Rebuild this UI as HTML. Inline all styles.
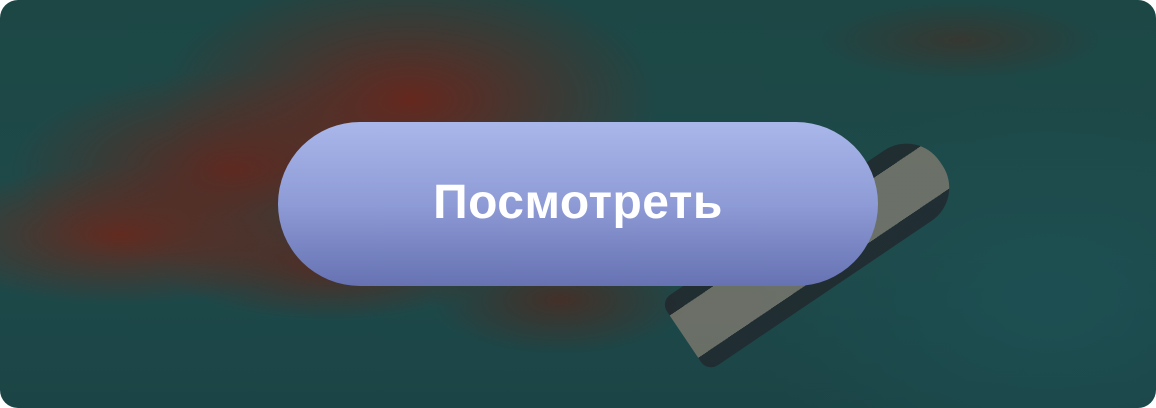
<!DOCTYPE html>
<html><head><meta charset="utf-8"><style>
html,body{margin:0;padding:0;background:#fff;}
.wrap{position:relative;width:1156px;height:408px;border-radius:18px;overflow:hidden;
background:
radial-gradient(ellipse 250px 130px at 410px 100px, rgba(105,38,28,0.95), rgba(105,38,28,0) 100%),
radial-gradient(ellipse 220px 100px at 230px 170px, rgba(100,38,28,0.9), rgba(100,38,28,0) 100%),
radial-gradient(ellipse 200px 70px at 120px 235px, rgba(105,40,28,0.9), rgba(105,40,28,0) 100%),
radial-gradient(ellipse 170px 55px at 330px 265px, rgba(95,38,28,0.85), rgba(95,38,28,0) 100%),
radial-gradient(ellipse 130px 55px at 560px 300px, rgba(80,40,30,0.75), rgba(80,40,30,0) 100%),
radial-gradient(ellipse 140px 40px at 960px 40px, rgba(80,40,30,0.5), rgba(80,40,30,0) 100%),
radial-gradient(ellipse 300px 200px at 1050px 300px, #1d4f52, rgba(29,79,82,0) 100%),
linear-gradient(180deg,#1c4745,#1e4a4a 60%,#1b4446);}
.ship{position:absolute;left:770px;top:95px;width:85px;height:310px;transform:rotate(56deg);transform-origin:center;
background:linear-gradient(90deg,#222228 0 20%,#8c8074 20% 80%,#222228 80%);border-radius:40px 40px 12px 12px;opacity:.7}
.btn{position:absolute;left:278px;top:122px;width:600px;height:164px;border-radius:82px;
background:linear-gradient(180deg,#a9b7ea 0%,#8e9bd6 50%,#6672b2 100%);
display:flex;align-items:center;justify-content:center;color:#fff;
font-family:"Liberation Sans",sans-serif;font-weight:bold;font-size:48px;letter-spacing:0.5px;padding-bottom:4px;box-sizing:border-box}
</style></head><body>
<div class="wrap">
<div class="ship"></div>
<div class="btn">Посмотреть</div>
</div>
</body></html>
